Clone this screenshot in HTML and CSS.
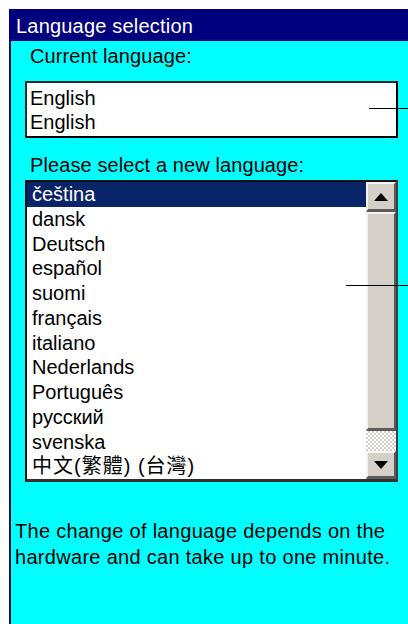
FILE: index.html
```html
<!DOCTYPE html>
<html lang="en">
<head>
<meta charset="utf-8">
<title>Language selection</title>
<link rel="stylesheet" href="styles.css">
</head>
<body>
<div class="window">
  <div class="titlebar">Language selection</div>
  <div class="content">
    <div class="label">Current language:</div>
    <div class="current-box">
      <div class="line">English</div>
      <div class="line">English</div>
    </div>

    <div class="label label-select">Please select a new language:</div>
    <div class="listbox">
      <ul class="items">
        <li class="item selected">čeština</li>
        <li class="item">dansk</li>
        <li class="item">Deutsch</li>
        <li class="item">español</li>
        <li class="item">suomi</li>
        <li class="item">français</li>
        <li class="item">italiano</li>
        <li class="item">Nederlands</li>
        <li class="item">Português</li>
        <li class="item">русский</li>
        <li class="item">svenska</li>
        <li class="item cjk">中文(繁體) (台灣)</li>
      </ul>
      <div class="scrollbar">
        <div class="sb-btn sb-up">
          <svg width="14" height="8" viewBox="0 0 14 8"><path d="M7 0 L14 8 L0 8 Z" fill="#000"/></svg>
        </div>
        <div class="sb-thumb"></div>
        <div class="sb-track"></div>
        <div class="sb-btn sb-down">
          <svg width="14" height="8" viewBox="0 0 14 8"><path d="M0 0 L14 0 L7 8 Z" fill="#000"/></svg>
        </div>
      </div>
    </div>

    <p class="note">The change of language depends on the hardware and can take up to one minute.</p>
  </div>

  <!-- callout leader lines -->
  <div class="leader leader-current"></div>
  <div class="leader leader-list"></div>
</div>
</body>
</html>
```

FILE: styles.css
```css
html, body {
  margin: 0;
  padding: 0;
  background: #ffffff;
  height: 100%;
}

body {
  font-family: "Liberation Sans", Arial, sans-serif;
  font-size: 20px;
  color: #000;
  overflow: hidden;
}

.window {
  position: relative;
  margin: 9px 0 0 9px;
  height: 615px;
  display: flex;
  flex-direction: column;
}

.titlebar {
  height: 30px;
  padding-top: 2px;
  line-height: 30px;
  background: #00007f;
  color: #ffffff;
  padding-left: 7px;
  font-size: 20px;
  letter-spacing: 0.2px;
}

.content {
  flex: 1;
  background: #00ffff;
  border-left: 2px solid #101040;
  padding: 3px 10px 0 14px;
  display: flex;
  flex-direction: column;
}

.label {
  line-height: 24px;
  padding-left: 5px;
  letter-spacing: 0.1px;
}

.label-select {
  margin-top: 15px;
}

.current-box {
  margin-top: 13px;
  background: #fff;
  border: 2px solid #1c2c2c;
  border-right-color: #000;
  border-bottom-color: #000;
  padding: 3px 0 0 3px;
  height: 50px;
}

.current-box .line {
  line-height: 24px;
}

.listbox {
  margin-top: 3px;
  background: #fff;
  border: 2px solid #101010;
  border-right: 2px solid #404040;
  border-bottom: 3px solid #303030;
  display: flex;
  height: 297px;
}

.items {
  list-style: none;
  margin: 0;
  padding: 0;
  flex: 1;
}

.item {
  height: 24.75px;
  line-height: 24px;
  padding-left: 5px;
  white-space: nowrap;
}

.item.selected {
  background: #0a246a;
  color: #fff;
}

.item.cjk {
  font-family: "Liberation Sans", "Noto Sans CJK TC", sans-serif;
  letter-spacing: 1px;
}

.scrollbar {
  width: 30px;
  display: flex;
  flex-direction: column;
  background: #d4d0c8;
}

.sb-btn,
.sb-thumb {
  box-sizing: border-box;
  background: #d4d0c8;
  border-top: 2px solid #f4f3ef;
  border-left: 2px solid #f4f3ef;
  border-right: 2px solid #5a5a5a;
  border-bottom: 3px solid #5a5a5a;
  display: flex;
  align-items: center;
  justify-content: center;
}

.sb-up {
  height: 30px;
}

.sb-thumb {
  height: 219px;
}

.sb-track {
  height: 20px;
  background-color: #ffffff;
  background-image:
    linear-gradient(45deg, #d4d0c8 25%, transparent 25%, transparent 75%, #d4d0c8 75%),
    linear-gradient(45deg, #d4d0c8 25%, transparent 25%, transparent 75%, #d4d0c8 75%);
  background-size: 4px 4px;
  background-position: 0 0, 2px 2px;
}

.sb-down {
  flex: 1;
}

.note {
  margin: 36px 0 0 -10px;
  line-height: 26px;
  letter-spacing: 0.3px;
}

.leader {
  position: absolute;
  height: 1px;
  background: #000;
  right: 0;
}

.leader-current {
  top: 99px;
  left: 360px;
}

.leader-list {
  top: 276px;
  left: 337px;
}
```
